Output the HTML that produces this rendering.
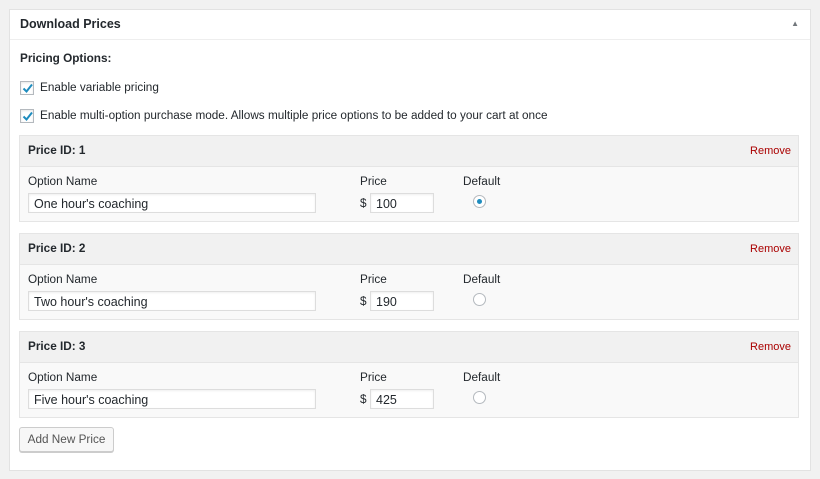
<!DOCTYPE html><html><head><style>
body{margin:0;background:#f1f1f1;font-family:"Liberation Sans",Arial,sans-serif;font-size:11.75px;color:#23282d;width:820px;height:479px;overflow:hidden;position:relative}
.p{position:absolute;left:9px;top:9px;width:800px;height:460px;background:#fff;border:1px solid #e2e2e2}
.h{position:absolute;left:0;top:0;right:0;height:29px;border-bottom:1px solid #eee;font-weight:bold;font-size:12.5px}
.a{position:absolute}
.cb{position:absolute;width:12px;height:12px;border:1px solid #b4b9be;background:#fff;box-shadow:inset 0 1px 2px rgba(0,0,0,.1)}
.row{position:absolute;left:9px;width:778px;height:85px;border:1px solid #e5e5e5;background:#f9f9f9}
.rh{position:absolute;left:0;top:0;right:0;height:30px;background:#f1f1f1;border-bottom:1px solid #e5e5e5}
.in{position:absolute;height:20px;border:1px solid #ddd;background:#fff;box-shadow:inset 0 1px 2px rgba(0,0,0,.07);line-height:20px;padding-left:5px;font-size:12.5px;box-sizing:border-box}
.rd{position:absolute;width:13px;height:13px;border-radius:50%;border:1px solid #b4b9be;background:#fff;box-sizing:border-box}
</style></head><body>
<div class="p">
<div class="h"><span class="a" style="left:10px;top:7px">Download Prices</span><span class="a" style="right:11px;top:9px;font-size:8px;color:#72777c">▲</span></div>
<div class="a" style="left:10px;top:42px;font-weight:bold">Pricing Options:</div>
<div class="cb" style="left:10px;top:71px"></div><svg class="a" style="left:12px;top:73px" width="12" height="11"><path d="M1.5 5.5 L4.5 8.5 L10 1.5" stroke="#1e8cbe" stroke-width="2" fill="none"/></svg>
<div class="a" style="left:30px;top:71px">Enable variable pricing</div>
<div class="cb" style="left:10px;top:99px"></div><svg class="a" style="left:12px;top:101px" width="12" height="11"><path d="M1.5 5.5 L4.5 8.5 L10 1.5" stroke="#1e8cbe" stroke-width="2" fill="none"/></svg>
<div class="a" style="left:30px;top:99px">Enable multi-option purchase mode. Allows multiple price options to be added to your cart at once</div>

<div class="row" style="top:125px"><div class="rh"><b class="a" style="left:8px;top:8px">Price ID: 1</b><span class="a" style="right:7px;top:9px;color:#a00;font-size:11px">Remove</span></div>
<span class="a" style="left:8px;top:39px">Option Name</span><span class="a" style="left:340px;top:39px">Price</span><span class="a" style="left:443px;top:39px">Default</span>
<div class="in" style="left:8px;top:57px;width:288px">One hour's coaching</div><span class="a" style="left:340px;top:61px">$</span><div class="in" style="left:350px;top:57px;width:64px">100</div>
<div class="rd" style="left:453px;top:59px"><div style="width:5px;height:5px;border-radius:50%;background:#1e8cbe;margin:3px"></div></div></div>

<div class="row" style="top:223px"><div class="rh"><b class="a" style="left:8px;top:8px">Price ID: 2</b><span class="a" style="right:7px;top:9px;color:#a00;font-size:11px">Remove</span></div>
<span class="a" style="left:8px;top:39px">Option Name</span><span class="a" style="left:340px;top:39px">Price</span><span class="a" style="left:443px;top:39px">Default</span>
<div class="in" style="left:8px;top:57px;width:288px">Two hour's coaching</div><span class="a" style="left:340px;top:61px">$</span><div class="in" style="left:350px;top:57px;width:64px">190</div>
<div class="rd" style="left:453px;top:59px"></div></div>

<div class="row" style="top:321px"><div class="rh"><b class="a" style="left:8px;top:8px">Price ID: 3</b><span class="a" style="right:7px;top:9px;color:#a00;font-size:11px">Remove</span></div>
<span class="a" style="left:8px;top:39px">Option Name</span><span class="a" style="left:340px;top:39px">Price</span><span class="a" style="left:443px;top:39px">Default</span>
<div class="in" style="left:8px;top:57px;width:288px">Five hour's coaching</div><span class="a" style="left:340px;top:61px">$</span><div class="in" style="left:350px;top:57px;width:64px">425</div>
<div class="rd" style="left:453px;top:59px"></div></div>

<div class="a" style="left:9px;top:417px;width:93px;height:23px;border:1px solid #ccc;border-radius:3px;background:#f7f7f7;box-shadow:0 1px 0 #ccc;text-align:center;line-height:23px;color:#555">Add New Price</div>
</div>
</body></html>
